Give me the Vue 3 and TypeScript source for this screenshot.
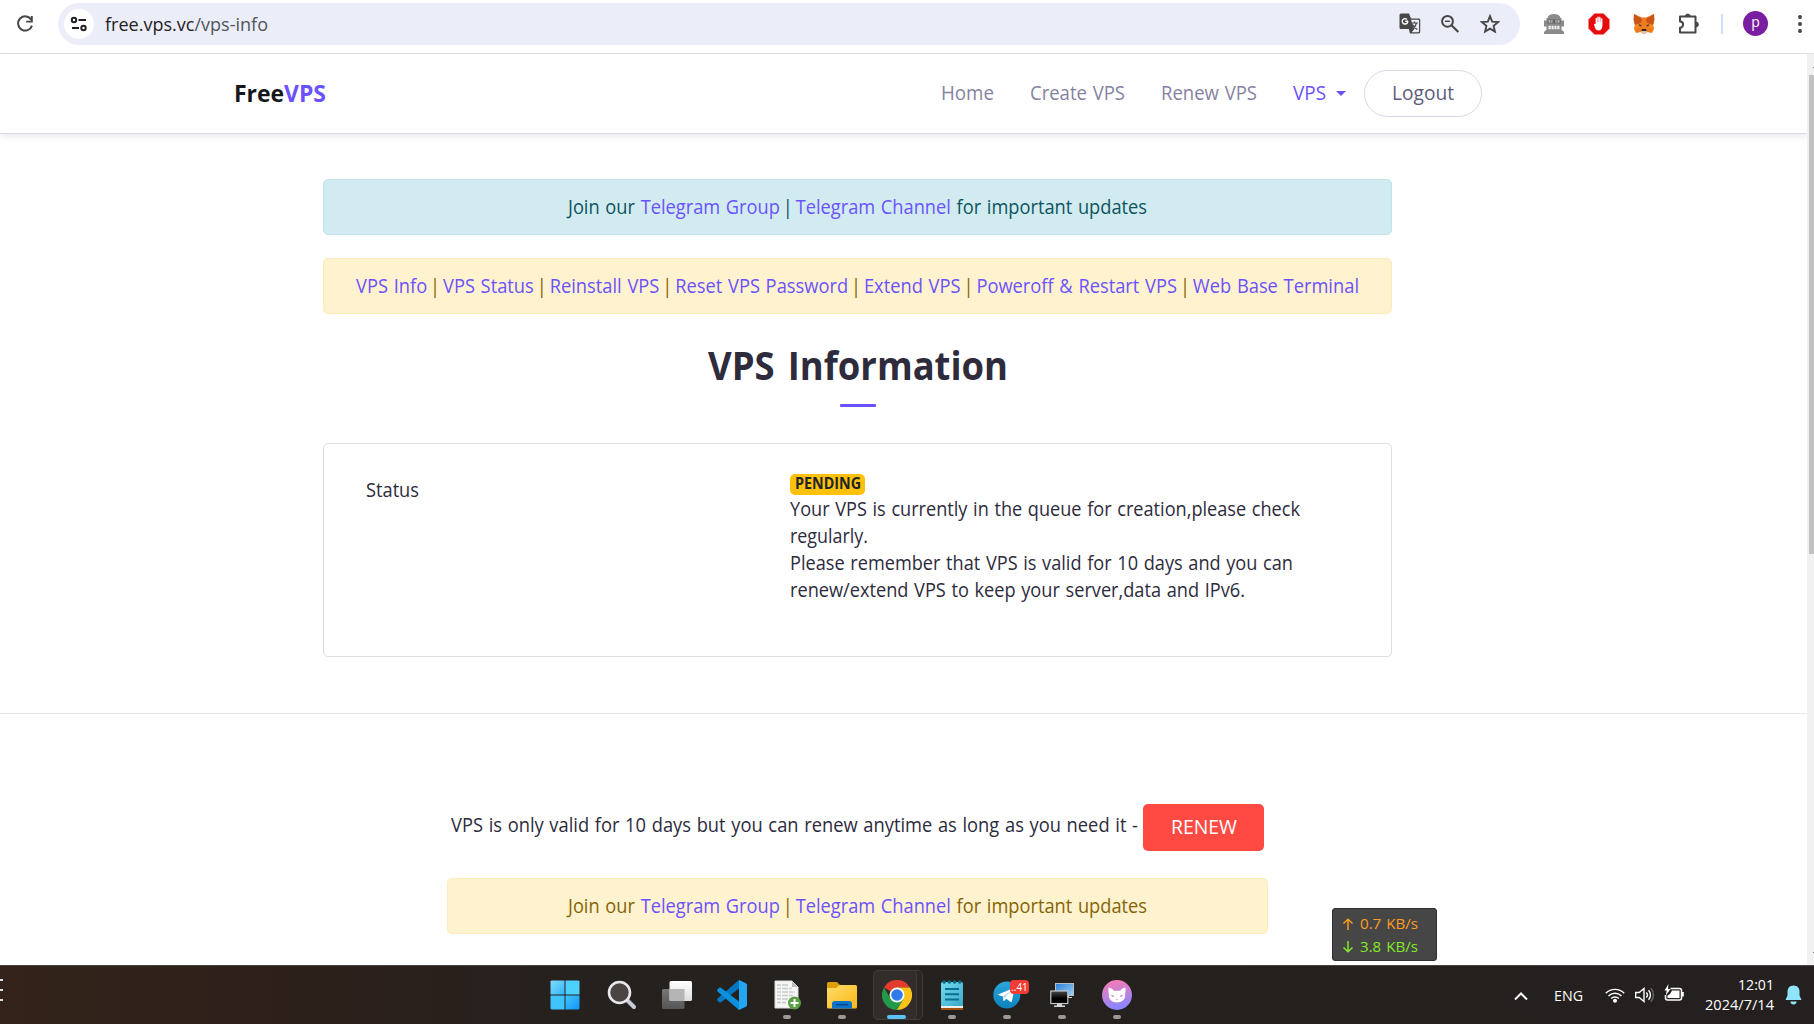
<script setup lang="ts">
import type { Directive } from 'vue'

interface NavLink {
  label: string
  width: number
}

// Condenses a line of text so that it occupies the given width in pixels.
const vFit: Directive<HTMLElement, number> = {
  mounted(el, binding) {
    const natural = el.getBoundingClientRect().width
    el.style.transform = `scaleX(${binding.value / natural})`
    el.style.marginRight = `${binding.value - natural}px`
  },
}

const navLinks: NavLink[] = [
  { label: 'Home', width: 53 },
  { label: 'Create VPS', width: 95 },
  { label: 'Renew VPS', width: 96 },
]

const vpsLinks: string[] = [
  'VPS Info',
  'VPS Status',
  'Reinstall VPS',
  'Reset VPS Password',
  'Extend VPS',
  'Poweroff & Restart VPS',
  'Web Base Terminal',
]
</script>

<template>
  <div class="screen">
    <header class="toolbar">
      <svg class="reload" width="24" height="24" viewBox="0 0 24 24">
        <path d="M18.2 7.6A7.1 7.1 0 1 0 19 13.6" fill="none" stroke="#474747" stroke-width="2" />
        <path d="M19.8 4v6.6h-6.6V8.700h4.600V4z" fill="#474747" />
      </svg>
      <div class="omnibox">
        <span class="site-chip">
          <svg width="18" height="16" viewBox="0 0 18 16" fill="none" stroke="#202124" stroke-width="2">
            <circle cx="4" cy="4" r="2.2" />
            <path d="M8.500 4H16M2 12h7" />
            <circle cx="13.500" cy="12" r="2.2" />
          </svg>
        </span>
        <span v-fit="163" class="fit url">free.vps.vc<i>/vps-info</i></span>
        <svg class="translate" width="22" height="22" viewBox="0 0 22 22">
          <path d="M2 .5h8l2 5h7.8c.8 0 1.4.6 1.4 1.4V19c0 .8-.6 1.4-1.4 1.4H11L9.8 16H2A1.500 1.500 0 0 1 .5 14.500V2A1.500 1.500 0 0 1 2 .5z" fill="#474747" />
          <path d="M12 6.700h7.200c.5 0 .8.3.8.8v11c0 .5-.3.8-.8.8h-6.500l2.500-3z" fill="#ebeef8" />
          <path d="M9 8.300H6.200M8.800 8.300c0 1.700-1.200 2.700-2.800 2.700a2.700 2.700 0 1 1 1.900-4.600" fill="none" stroke="#fff" stroke-width="1.400" />
          <path d="M12.500 10h6.300M15.500 8.500V10M17.500 10c-.6 2.600-2 4.500-4 6M13.500 11.500c.8 2 2.500 3.800 4.800 5" fill="none" stroke="#474747" stroke-width="1.200" />
        </svg>
        <svg class="zoom-out" width="20" height="20" viewBox="0 0 20 20" fill="none" stroke="#474747">
          <circle cx="7.500" cy="7.300" r="5.400" stroke-width="2" />
          <path d="M11.500 11.300l6.800 6.700" stroke-width="2.200" />
          <path d="M5 7.300h5" stroke-width="1.500" />
        </svg>
        <svg class="star" width="20" height="20" viewBox="0 0 20 20">
          <path d="M10 2.200l2.200 5.400 5.800.5-4.400 3.800 1.300 5.700-4.900-3-4.900 3 1.300-5.700L2 8.100l5.800-.5z" fill="none" stroke="#474747" stroke-width="1.900" />
        </svg>
      </div>
      <div class="extensions">
        <svg width="22" height="22" viewBox="0 0 22 22">
          <path d="M4.500 5c.5-2.500 3-4 6.500-4s6 1.500 6.500 4zM3.500 5h15v12h-15zM1 7.500h2.500v6H1zM18.500 7.500H21v6h-2.500zM3 17h16l2 2v2H1v-2z" fill="#8a8a8a" />
          <path d="M4.500 6.500h13v4h-13z" fill="#666" />
          <path d="M5.500 7.300h4v2.200h-4zM12.500 7.300h4v2.200h-4z" fill="#c4c4c4" />
          <path d="M7 8.200h1.500M13.500 8.200H15" stroke="#555" />
          <path d="M5.500 12.800h11v3.400h-11z" fill="#f0f0f0" />
          <path d="M8.200 12.800v3.400M11 12.800v3.400M13.800 12.800v3.400" stroke="#8a8a8a" stroke-width=".8" />
        </svg>
        <svg width="22" height="22" viewBox="0 0 22 22">
          <path d="M6.500.5h9l6 6v9l-6 6h-9l-6-6v-9z" fill="#e80b0e" />
          <path d="M6 11.500c0-.9 1.200-1 1.600-.2V5.500c0-1 1.400-1 1.400 0V9l.3.200V4.300c0-1 1.500-1 1.500 0V9h.3V4.500c0-1 1.500-1 1.500 0v4.700h.3V6c0-1 1.500-1 1.500 0v6.500c0 3-1.400 5-3.900 5-3 0-3.600-3-4.500-6z" fill="#fff" />
        </svg>
        <svg width="22" height="22" viewBox="0 0 22 22">
          <path d="M1 1l8 3.500h4L21 1l.3 6-1.300 6 1 3-2 4-5-1-1.500 1.500h-3L8 19l-5 1-2-4 1-3L.7 7z" fill="#f07a1c" />
          <path d="M1 1l8 5-1 4-6 2L.7 7zM21 1l-8 5 1 4 6 2 1.300-5z" fill="#c8561a" />
          <path d="M2 12l6-2-1 5-6 1zM20 12l-6-2 1 5 6 1z" fill="#f6851b" />
          <path d="M6 10.500l3 2.500-2.500.5zM16 10.500L13 13l2.500.5z" fill="#3a3f4b" />
          <path d="M8 19l1.500-2.500h3L14 19l-1.500 1.500h-3z" fill="#d8c3b3" />
          <path d="M9 16h4l.5 2h-5z" fill="#26282f" />
        </svg>
        <svg width="22" height="22" viewBox="0 0 22 22">
          <path d="M2 3.500h15.500v16H2v-4.800a3 3 0 0 0 0-6.200z" fill="none" stroke="#474747" stroke-width="2" stroke-linejoin="round" />
          <path d="M7.300 3.500a2.500 2.500 0 0 1 5 0zM18 9a2.500 2.500 0 0 1 0 5z" fill="#474747" stroke="#474747" stroke-width=".8" />
        </svg>
      </div>
      <span class="divider"></span>
      <span class="avatar">p</span>
      <svg class="kebab" width="6" height="20" viewBox="0 0 6 20" fill="#474747">
        <circle cx="3" cy="3" r="2" /><circle cx="3" cy="10" r="2" /><circle cx="3" cy="17" r="2" />
      </svg>
    </header>

    <div class="viewport">
      <div class="page">
        <nav class="navbar">
          <a v-fit="92" class="fit brand">Free<b>VPS</b></a>
          <div class="links">
            <a v-for="link in navLinks" :key="link.label"><span v-fit="link.width" class="fit">{{ link.label }}</span></a>
            <a class="active"><span v-fit="33" class="fit">VPS</span><span class="caret"></span></a>
            <a class="logout"><span v-fit="62" class="fit">Logout</span></a>
          </div>
        </nav>

        <main class="content">
          <div class="alert info">
            <span v-fit="579" class="fit">Join our <a>Telegram Group</a> <s>|</s> <a>Telegram Channel</a> for important updates</span>
          </div>
          <div class="alert warning menu">
            <span v-fit="1003" class="fit"><template v-for="(link, i) in vpsLinks" :key="link"><template v-if="i > 0">{{ ' ' }}<s>|</s>{{ ' ' }}</template><a>{{ link }}</a></template></span>
          </div>
          <h1><span v-fit="300" class="fit">VPS Information</span></h1>
          <div class="rule"></div>
          <section class="card">
            <div class="label"><span v-fit="53" class="fit">Status</span></div>
            <div class="value">
              <div class="badge"><span v-fit="66" class="fit">PENDING</span></div>
              <p><span v-fit="510" class="fit">Your VPS is currently in the queue for creation,please check</span></p>
              <p><span v-fit="78" class="fit">regularly.</span></p>
              <p><span v-fit="503" class="fit">Please remember that VPS is valid for 10 days and you can</span></p>
              <p><span v-fit="455" class="fit">renew/extend VPS to keep your server,data and IPv6.</span></p>
            </div>
          </section>
        </main>

        <footer class="footer">
          <div class="renew">
            <span v-fit="687" class="fit">VPS is only valid for 10 days but you can renew anytime as long as you need it -</span>
            <button><span v-fit="66" class="fit">RENEW</span></button>
          </div>
          <div class="alert warning">
            <span v-fit="579" class="fit">Join our <a>Telegram Group</a> <s>|</s> <a>Telegram Channel</a> for important updates</span>
          </div>
        </footer>
      </div>
      <div class="scrollbar">
        <span class="arrow"></span>
        <span class="thumb"></span>
        <span class="arrow end"></span>
      </div>
    </div>

    <div class="speed">
      <div class="up">
        <svg width="12" height="12" viewBox="0 0 12 12" fill="none" stroke="currentColor" stroke-width="1.500"><path d="M6 12V1.500M1.500 5.500L6 1.300l4.500 4.200" /></svg>
        <span v-fit="58" class="fit">0.7 KB/s</span>
      </div>
      <div class="down">
        <svg width="12" height="12" viewBox="0 0 12 12" fill="none" stroke="currentColor" stroke-width="1.500"><path d="M6 0v10.500M1.500 6.500L6 10.700l4.500-4.200" /></svg>
        <span v-fit="58" class="fit">3.8 KB/s</span>
      </div>
    </div>

    <div class="taskbar">
      <div class="widgets"><i></i><i></i><i></i></div>
      <div class="apps">
        <div class="app start">
          <svg width="30" height="30" viewBox="0 0 30 30">
            <defs>
              <linearGradient id="win" x1="0" y1="0" x2="1" y2="1">
                <stop offset="0" stop-color="#7fdcff" /><stop offset="1" stop-color="#34b5f8" />
              </linearGradient>
              <linearGradient id="win2" x1="0" y1="0" x2="1" y2="1">
                <stop offset="0" stop-color="#45c4fb" /><stop offset="1" stop-color="#0f94fb" />
              </linearGradient>
            </defs>
            <path d="M1.500.500h13v14H.500v-13z" fill="url(#win)" />
            <path d="M15.500.500h13l1 1v13h-14z" fill="#4cd0fc" />
            <path d="M.500 15.500h14v14h-13l-1-1z" fill="#3fc4fc" />
            <path d="M15.500 15.500h14v13l-1 1h-13z" fill="url(#win2)" />
          </svg>
        </div>
        <div class="app">
          <svg width="30" height="30" viewBox="0 0 30 30">
            <path d="M20 20l7 7" stroke="#c9ccd6" stroke-width="4" stroke-linecap="round" />
            <circle cx="12.500" cy="12.500" r="10.500" fill="#4a4443" stroke="#e8e8ec" stroke-width="2.600" />
          </svg>
        </div>
        <div class="app">
          <svg width="30" height="30" viewBox="0 0 30 30">
            <defs>
              <linearGradient id="tv" x1="0" y1="0" x2="0" y2="1"><stop offset="0" stop-color="#fff" /><stop offset="1" stop-color="#ddd" /></linearGradient>
              <linearGradient id="tv2" x1="0" y1="0" x2="0" y2="1"><stop offset="0" stop-color="#777" /><stop offset="1" stop-color="#565656" /></linearGradient>
            </defs>
            <rect x="0" y="9" width="22.500" height="20" rx="1.500" fill="url(#tv2)" />
            <rect x="7.500" y="1" width="22.500" height="20" rx="1.500" fill="url(#tv)" />
            <path d="M7.500 9h15v12h-14a1 1 0 0 1-1-1z" fill="#b5b5b5" />
          </svg>
        </div>
        <div class="app">
          <svg width="30" height="30" viewBox="0 0 30 30">
            <path d="M22 0v8.500L4 22.300c-.6.4-1.300.4-1.800-.1l-1.600-1.500c-.7-.6-.7-1.600 0-2.200z" fill="#0079c2" />
            <path d="M22 30v-8.500L4 7.700c-.6-.4-1.300-.4-1.800.1L.600 9.300c-.7.6-.7 1.600 0 2.200z" fill="#0a90dc" />
            <path d="M22 0l6.800 3.200c.8.4 1.200 1 1.200 1.800v20c0 .8-.4 1.400-1.200 1.800L22 30z" fill="#23a7f2" />
          </svg>
        </div>
        <div class="app">
          <svg width="30" height="30" viewBox="0 0 30 30">
            <path d="M3 1h17l6 6v21H3z" fill="#f5f5f5" stroke="#ddd" />
            <path d="M20 1v6h6z" fill="#b9bcbc" />
            <path d="M5 5h12M5 8.500h15M5 12h18M5 15.500h16M5 19h13M5 22.500h9" stroke="#c8caca" stroke-width="1.400" stroke-dasharray="4 1 6 1" />
            <circle cx="22.500" cy="23" r="6.500" fill="#5a9e43" />
            <path d="M22.500 19v8M18.500 23h8" stroke="#fff" stroke-width="2" />
          </svg>
          <span class="dot"></span>
        </div>
        <div class="app">
          <svg width="30" height="30" viewBox="0 0 30 30">
            <defs><linearGradient id="fold" x1="0" y1="0" x2="1" y2="1"><stop offset="0" stop-color="#ffdc6c" /><stop offset="1" stop-color="#fbb816" /></linearGradient></defs>
            <path d="M0 3.500A1.500 1.500 0 0 1 1.500 2H10l3 3-2 5H0z" fill="#e19d06" />
            <path d="M0 8h9l3.500-3H28.500A1.500 1.500 0 0 1 30 6.500V27a1.500 1.500 0 0 1-1.500 1.500h-27A1.500 1.500 0 0 1 0 27z" fill="url(#fold)" />
            <path d="M5 28.500V24a3 3 0 0 1 3-3h14a3 3 0 0 1 3 3v4.500z" fill="#0e73c8" />
            <path d="M9 24.700h12" stroke="#064a8c" stroke-width="1.400" />
          </svg>
          <span class="dot"></span>
        </div>
        <div class="app current">
          <svg width="30" height="30" viewBox="0 0 30 30">
            <path d="M15 15L2 7.500A15 15 0 0 1 28 7.500H15z" fill="#e33b2e" />
            <path d="M15 15L8.500 18.800 2 7.500A15 15 0 0 0 15 30l6.500-11.200z" fill="#229a4a" />
            <path d="M15 7.500h13A15 15 0 0 1 15 30l6.500-11.300z" fill="#fcc31b" />
            <circle cx="15" cy="15" r="7.500" fill="#fff" />
            <circle cx="15" cy="15" r="5.800" fill="#2f7bec" />
          </svg>
          <span class="dot"></span>
        </div>
        <div class="app">
          <svg width="30" height="30" viewBox="0 0 30 30">
            <defs><linearGradient id="note" x1="0" y1="0" x2="1" y2="1"><stop offset="0" stop-color="#74dcee" /><stop offset="1" stop-color="#3ba9ca" /></linearGradient></defs>
            <path d="M4 26h22v3a1 1 0 0 1-1 1H5a1 1 0 0 1-1-1z" fill="#a2500f" />
            <path d="M4 25h22v3H4z" fill="#f1efee" />
            <path d="M4 3.500A1.500 1.500 0 0 1 5.500 2h19A1.500 1.500 0 0 1 26 3.500V26H4z" fill="url(#note)" />
            <path d="M8 9h14M8 14.200h14M8 19.400h14" stroke="#0d6e93" stroke-width="2" />
            <g fill="#0f6b85"><circle cx="7.200" cy="2" r="1.800" /><circle cx="12.400" cy="2" r="1.800" /><circle cx="17.600" cy="2" r="1.800" /><circle cx="22.800" cy="2" r="1.800" /></g>
          </svg>
          <span class="dot"></span>
        </div>
        <div class="app">
          <svg width="30" height="30" viewBox="0 0 30 30">
            <defs><linearGradient id="tg" x1="0" y1="0" x2="0" y2="1"><stop offset="0" stop-color="#2ba6dd" /><stop offset="1" stop-color="#0d82bd" /></linearGradient></defs>
            <circle cx="14.800" cy="15" r="13.500" fill="url(#tg)" />
            <path d="M5.500 14.800L21 8.300c.8-.3 1.400.2 1.200 1.200L20 21c-.2 1-.9 1.200-1.700.7l-4-3-2 2c-.4.4-1 .3-1-.4l-.3-3.700z" fill="#fff" />
            <path d="M10.600 16.800l8.500-6-6.500 7.300z" fill="#b8d4e8" />
          </svg>
          <span class="count">..41</span>
          <span class="dot"></span>
        </div>
        <div class="app">
          <svg width="30" height="30" viewBox="0 0 30 30">
            <defs>
              <linearGradient id="scr" x1="0" y1="0" x2="1" y2="1"><stop offset="0" stop-color="#2c7fd6" /><stop offset="1" stop-color="#9bd4fb" /></linearGradient>
              <linearGradient id="scr2" x1="0" y1="0" x2="0" y2="1"><stop offset="0" stop-color="#4a4a4a" /><stop offset="0.600" stop-color="#000" /></linearGradient>
            </defs>
            <rect x="8.500" y="3.500" width="18" height="12" fill="url(#scr)" stroke="#b8bfc4" />
            <path d="M18 16v2h7v-1h-3v-1z" fill="#ccc" />
            <rect x="3.800" y="11" width="17" height="12.500" fill="url(#scr2)" stroke="#c5c5c5" stroke-width="1.200" />
            <path d="M10 24h5v1.500h3V27H7v-1.500h3z" fill="#d8d8d8" />
          </svg>
          <span class="dot"></span>
        </div>
        <div class="app">
          <svg width="30" height="30" viewBox="0 0 30 30">
            <defs><linearGradient id="cat" x1="0" y1="0" x2="0.200" y2="1"><stop offset="0" stop-color="#ff7bac" /><stop offset="1" stop-color="#8b85ff" /></linearGradient></defs>
            <circle cx="15" cy="15" r="15" fill="url(#cat)" />
            <path d="M6.500 7.500c2.500.3 4 1.600 5.300 3.200h6.400c1.300-1.600 2.800-2.900 5.300-3.200.3 3-.1 4.900-.4 7 1 4.500-3.500 8-8.100 8s-9.100-3.500-8.100-8c-.3-2.100-.7-4-.4-7z" fill="#fff" />
            <path d="M9 14.800c1.600 0 2.700.8 3.300 2-1.600.2-2.900-.5-3.300-2zM21 14.800c-1.600 0-2.700.8-3.300 2 1.600.2 2.900-.5 3.300-2zM13.800 19h2.400L15 20z" fill="#c77be0" />
          </svg>
          <span class="dot"></span>
        </div>
      </div>

      <div class="tray">
        <svg class="chevron" width="14" height="10" viewBox="0 0 14 10"><path d="M1 8.500l6-6 6 6" fill="none" stroke="#f5f5f5" stroke-width="2" /></svg>
        <span v-fit="29" class="fit lang">ENG</span>
        <svg class="wifi" width="20" height="16" viewBox="0 0 20 16" fill="none" stroke="#fff" stroke-width="1.400">
          <path d="M.8 6.200a13 13 0 0 1 18.400 0M3.500 9a9.200 9.200 0 0 1 13 0M6.200 11.600a5.400 5.400 0 0 1 7.600 0" />
          <circle cx="10" cy="13.700" r="1.300" fill="#fff" />
        </svg>
        <svg class="sound" width="20" height="16" viewBox="0 0 20 16" fill="none" stroke="#fff" stroke-width="1.400">
          <path d="M.7 5.500h3.500L9 1.500v13L4.200 10.500H.7z" />
          <path d="M11.300 5.500a3.600 3.600 0 0 1 0 5M13.500 3.300a6.600 6.600 0 0 1 0 9.400" />
          <path d="M15.800 1.300a9.600 9.600 0 0 1 0 13.400" stroke="#666" />
        </svg>
        <svg class="battery" width="20" height="18" viewBox="0 0 20 18">
          <path d="M6.500 4.500h9a2 2 0 0 1 2 2v7.500a2 2 0 0 1-2 2H3.500a2 2 0 0 1-2-2v-3" fill="none" stroke="#fff" stroke-width="1.500" />
          <path d="M8 6.500h7.500V14h-12v-2.500L6 10zM18 8h1.800v4.500H18z" fill="#fff" />
          <path d="M4.500 0L.5 6.500h2.200L1.800 11.500 6.500 5H4z" fill="#fff" />
        </svg>
        <div class="clock">
          <span v-fit="36" class="fit">12:01</span>
          <span v-fit="69" class="fit">2024/7/14</span>
        </div>
        <svg class="bell" width="17" height="20" viewBox="0 0 17 20" fill="#8fe4fb">
          <path d="M8.500.500c4 0 6 2.800 6 6v4l2 4.500H.500l2-4.500v-4c0-3.200 2-6 6-6z" />
          <path d="M5.500 16.500h6a3 3 0 0 1-6 0z" />
        </svg>
      </div>
    </div>
  </div>
</template>

<style>
body {
  overflow: hidden;
}
</style>

<style scoped>
.screen {
  position: relative;
  display: flex;
  flex-direction: column;
  width: 1814px;
  height: 1024px;
  overflow: hidden;
  background: #fff;
  color: #2d2b3c;
  font-family: 'Open Sans', 'Noto Sans', sans-serif;
  font-size: 19.5px;
  white-space: nowrap;
  word-spacing: 1px;
}

svg {
  display: block;
  flex: none;
}

a {
  color: #6b52ff;
}

.fit {
  display: inline-block;
  flex: none;
  transform-origin: 0 50%;
}

/* Link separator */
s {
  margin: 0 -3px;
  text-decoration: none;
}

/* Browser toolbar */
.toolbar {
  display: flex;
  align-items: center;
  box-sizing: border-box;
  flex: none;
  height: 54px;
  padding: 0 7px 6px 13px;
  border-bottom: 1px solid #dee0e5;
}

.omnibox {
  display: flex;
  align-items: center;
  box-sizing: border-box;
  width: 1462px;
  height: 42px;
  margin-left: 21px;
  padding: 0 20px 0 6px;
  border-radius: 21px;
  background: #ebeef8;
}

.site-chip {
  display: flex;
  align-items: center;
  justify-content: center;
  width: 30px;
  height: 30px;
  margin-right: 11px;
  border-radius: 50%;
  background: #fff;
}

.url {
  color: #1f2023;
  font-size: 18.5px;
}

.url i {
  color: #50545b;
  font-style: normal;
}

.url + .translate {
  margin-left: auto;
}

.zoom-out {
  margin-left: 19px;
}

.star {
  margin-left: 20px;
}

.extensions {
  display: flex;
  gap: 23px;
  margin-left: 23px;
}

.divider {
  width: 2px;
  height: 20px;
  margin-left: 21px;
  background: #d0e0fb;
}

.avatar {
  width: 25px;
  height: 25px;
  margin-left: 20px;
  border-radius: 50%;
  background: #7a1ea1;
  color: #fff;
  font-size: 14px;
  line-height: 22px;
  text-align: center;
}

.kebab {
  margin-left: auto;
  margin-right: 4px;
}

/* Page */
.viewport {
  display: flex;
  flex: none;
  height: 911px;
}

.page {
  display: flex;
  flex-direction: column;
  width: 1807px;
}

.navbar {
  display: flex;
  align-items: center;
  justify-content: space-between;
  box-sizing: border-box;
  flex: none;
  height: 80px;
  padding: 0 325px 1px 234px;
  border-bottom: 1px solid #dad8e9;
  box-shadow: 0 3px 6px rgba(60, 60, 90, 0.09);
}

.brand {
  padding-bottom: 2px;
  color: #15171a;
  font-size: 24px;
  font-weight: 700;
}

.brand b {
  color: #6b52ff;
  font-weight: inherit;
}

.links {
  display: flex;
  align-items: center;
  gap: 36px;
  line-height: 26px;
}

.links a {
  color: #8583a2;
}

.links .active {
  display: flex;
  align-items: center;
  color: #6b52ff;
}

.caret {
  margin-left: 10px;
  border: 5px solid transparent;
  border-top-color: #6b52ff;
  border-bottom: 0;
}

.links .logout {
  display: flex;
  align-items: center;
  justify-content: center;
  box-sizing: border-box;
  width: 118px;
  height: 47px;
  margin-left: -18px;
  border: 1px solid #d9d6ec;
  border-radius: 24px;
  color: #5e5c7c;
}

.content {
  display: flex;
  flex-direction: column;
  align-items: center;
  box-sizing: border-box;
  flex: none;
  height: 580px;
  padding: 45px 415px 0 323px;
  border-bottom: 1px solid #e6e7ef;
}

.alert {
  display: flex;
  justify-content: center;
  box-sizing: border-box;
  width: 100%;
  height: 56px;
  margin-bottom: 23px;
  border: 1px solid;
  border-radius: 5px;
  line-height: 53px;
}

.alert span {
  white-space: pre;
}

.menu {
  line-height: 54px;
}

.info {
  border-color: #bee5eb;
  background: #d1ebf0;
  color: #0c5460;
}

.warning {
  border-color: #ffecb8;
  background: #fff2cf;
  color: #856404;
}

h1 {
  display: flex;
  margin: 0;
  font-size: 39px;
  font-weight: 700;
  line-height: 56px;
  word-spacing: 4px;
}

.rule {
  flex: none;
  width: 36px;
  height: 3px;
  margin-top: 11px;
  border-radius: 1px;
  background: #6b52ff;
}

.card {
  display: flex;
  box-sizing: border-box;
  flex: none;
  width: 100%;
  height: 214px;
  margin-top: 36px;
  padding: 30px 0 0 42px;
  border: 1px solid #dcdde0;
  border-radius: 5px;
}

.label {
  width: 424px;
  padding-top: 1px;
  line-height: 30px;
}

.badge {
  display: flex;
  justify-content: center;
  width: 75px;
  height: 21px;
  border-radius: 5px;
  background: #ffc10a;
  color: #212529;
  font-size: 15.5px;
  font-weight: 700;
  line-height: 19px;
}

.value p {
  display: flex;
  margin: 0;
  line-height: 27px;
}

.footer {
  display: flex;
  flex-direction: column;
  align-items: center;
  box-sizing: border-box;
  padding: 90px 539px 0 447px;
}

.renew {
  display: flex;
  width: 813px;
  height: 47px;
  margin-bottom: 27px;
  line-height: 42px;
}

.renew button {
  display: flex;
  justify-content: center;
  width: 121px;
  height: 47px;
  margin-left: auto;
  padding: 0;
  border: 0;
  border-radius: 5px;
  background: #ff4943;
  color: #fff;
  font: inherit;
  line-height: 46px;
}

.scrollbar {
  display: flex;
  flex-direction: column;
  align-items: flex-end;
  width: 7px;
  padding-top: 13px;
  box-sizing: border-box;
  background: #f1f1f1;
}

.arrow {
  width: 1px;
  height: 1px;
  background: #777;
}

.end {
  margin-top: auto;
  margin-bottom: 12px;
}

.thumb {
  width: 5px;
  height: 479px;
  margin-top: 7px;
  background: #c1c1c1;
}

/* Network speed overlay */
.speed {
  position: absolute;
  top: 908px;
  left: 1332px;
  box-sizing: border-box;
  width: 105px;
  height: 53px;
  padding: 3px 0 0 9px;
  border: 1px solid #303030;
  border-radius: 3px;
  background: #464646;
  font-size: 15px;
  line-height: 23px;
}

.speed div {
  display: flex;
  align-items: center;
  gap: 6px;
}

.up {
  color: #fd9d1e;
}

.down {
  color: #84ea28;
}

/* Taskbar */
.taskbar {
  display: flex;
  box-sizing: border-box;
  flex: none;
  height: 59px;
  border-top: 1px solid #484644;
  background: linear-gradient(90deg, #33231a 0, #2c201b 330px, #25211e 620px, #24201f 100%);
}

.widgets {
  display: flex;
  flex-direction: column;
  gap: 8px;
  width: 539px;
  padding-top: 13px;
}

.widgets i {
  width: 3px;
  height: 2px;
  background: #ddd;
}

.apps {
  display: flex;
}

.app {
  position: relative;
  display: flex;
  justify-content: center;
  width: 55px;
  height: 58px;
  padding-top: 14px;
  box-sizing: border-box;
}

.start {
  padding-right: 3px;
}

.dot {
  position: absolute;
  bottom: 5px;
  left: 24px;
  width: 8px;
  height: 4px;
  border-radius: 2px;
  background: #9c9896;
}

.current::before,
.current::after {
  content: '';
  position: absolute;
  top: 4px;
  left: 4px;
  box-sizing: border-box;
  width: 44px;
  height: 50px;
  border: 1px solid #3f3b38;
  border-radius: 5px;
  background: #322d2a;
}

.current::before {
  width: 50px;
  background: #2a2623;
}

.current svg,
.current .dot {
  z-index: 1;
}

.current .dot {
  left: 18px;
  width: 19px;
  background: #5cc3fa;
}

.count {
  position: absolute;
  top: 14px;
  left: 31px;
  width: 19px;
  height: 14px;
  border-radius: 4px;
  background: #f23c34;
  color: #fff;
  font-size: 10px;
  line-height: 14px;
  text-align: center;
}

.tray {
  display: flex;
  align-items: center;
  margin-left: auto;
  padding-right: 12px;
  color: #fff;
}

.lang {
  margin-left: 26px;
  padding-bottom: 1px;
  font-size: 15px;
}

.chevron {
  margin-top: 1px;
}

.wifi {
  margin-left: 22px;
}

.sound {
  margin-left: 10px;
}

.battery {
  margin-left: 9px;
  margin-top: -4px;
}

.clock {
  display: flex;
  flex-direction: column;
  align-items: flex-end;
  width: 90px;
  padding-bottom: 2px;
  font-size: 15px;
  line-height: 20px;
}

.bell {
  margin-left: 11px;
}
</style>
